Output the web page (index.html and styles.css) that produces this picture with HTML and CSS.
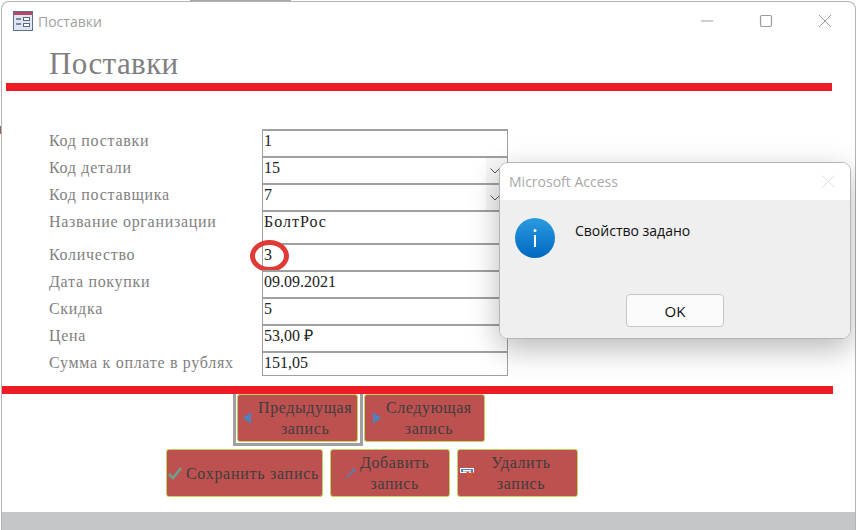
FILE: index.html
```html
<!DOCTYPE html>
<html lang="ru">
<head>
<meta charset="utf-8">
<title>Поставки</title>
<link rel="stylesheet" href="styles.css">
</head>
<body>
<div class="behind behind-bar"></div>
<div class="behind behind-tick"></div>
<div class="window">
  <header class="titlebar">
    <svg class="app-icon" width="20" height="20" viewBox="0 0 20 20">
      <rect x="0.5" y="0.5" width="19" height="19" fill="#dfe6f0" stroke="#5f6f8c"/>
      <rect x="1" y="1" width="18" height="3" fill="#b5476b"/>
      <path d="M3 8h5M3 13h5" stroke="#5a6a85" stroke-width="1.4"/>
      <rect x="10.5" y="6.5" width="6" height="3" fill="#fff" stroke="#5a6a85"/>
      <rect x="10.5" y="12.5" width="6" height="3" fill="#fff" stroke="#5a6a85"/>
    </svg>
    <span class="app-title">Поставки</span>
    <div class="controls">
      <svg width="14" height="14" viewBox="0 0 14 14"><path d="M1 7h12" stroke="#9a9a9a" stroke-width="1"/></svg>
      <svg width="14" height="14" viewBox="0 0 14 14"><rect x="1.5" y="1.5" width="11" height="11" rx="1.5" fill="none" stroke="#9a9a9a" stroke-width="1.2"/></svg>
      <svg width="14" height="14" viewBox="0 0 14 14"><path d="M1 1l12 12M13 1L1 13" stroke="#9a9a9a" stroke-width="1"/></svg>
    </div>
  </header>
  <h1 class="heading">Поставки</h1>
  <div class="rule rule-top"></div>
  <form class="record">
    <label class="lbl">Код поставки</label><div class="val">1</div>
    <label class="lbl">Код детали</label><div class="val combo">15<span class="drop"><svg width="10" height="6" viewBox="0 0 10 6"><path d="M0.5 0.5L5 5l4.5-4.5" fill="none" stroke="#555"/></svg></span></div>
    <label class="lbl">Код поставщика</label><div class="val combo">7<span class="drop"><svg width="10" height="6" viewBox="0 0 10 6"><path d="M0.5 0.5L5 5l4.5-4.5" fill="none" stroke="#555"/></svg></span></div>
    <label class="lbl">Название организации</label><div class="val tall">БолтРос</div>
    <label class="lbl">Количество</label><div class="val qty">3<span class="ring"></span></div>
    <label class="lbl">Дата покупки</label><div class="val">09.09.2021</div>
    <label class="lbl">Скидка</label><div class="val">5</div>
    <label class="lbl">Цена</label><div class="val">53,00 ₽</div>
    <label class="lbl">Сумма к оплате в рублях</label><div class="val last">151,05</div>
  </form>
  <div class="rule rule-bottom"></div>
  <div class="btn-row row-nav">
    <div class="focus">
      <div class="btn prev">
        <svg width="8" height="12" viewBox="0 0 8 12"><path d="M8 0v12L0 6z" fill="#4f81bd"/></svg>
        <span class="cap">Предыдущая<br>запись</span>
      </div>
    </div>
    <div class="btn next">
      <svg width="8" height="12" viewBox="0 0 8 12"><path d="M0 0v12l8-6z" fill="#4f81bd"/></svg>
      <span class="cap">Следующая<br>запись</span>
    </div>
  </div>
  <div class="btn-row row-edit">
    <div class="btn save">
      <svg width="14" height="13" viewBox="0 0 14 13"><path d="M1 7l4 4 8-10" fill="none" stroke="#6f9f8a" stroke-width="2.6"/></svg>
      <span class="cap">Сохранить запись</span>
    </div>
    <div class="btn add">
      <svg width="12" height="12" viewBox="0 0 12 12"><path d="M1 11l7-7" stroke="#4f81bd" stroke-width="1.4"/><path d="M7 3l2-2 2 2-2 2z" fill="#4f81bd"/></svg>
      <span class="cap">Добавить<br>запись</span>
    </div>
    <div class="btn del">
      <svg width="15" height="11" viewBox="0 0 15 11"><rect x="0.5" y="0.5" width="13" height="4" fill="#4f81bd" stroke="#fff"/><rect x="3" y="2" width="8" height="1.5" fill="#fff"/><path d="M7 4l6 6M13 4l-6 6" stroke="#d0553a" stroke-width="2.2"/></svg>
      <span class="cap">Удалить<br>запись</span>
    </div>
  </div>
  <div class="status"></div>
</div>
<div class="dialog">
  <div class="dlg-head">
    <span>Microsoft Access</span>
    <svg width="13" height="13" viewBox="0 0 13 13"><path d="M0.5 0.5l12 12M12.5 0.5l-12 12" stroke="#dedede"/></svg>
  </div>
  <div class="dlg-body">
    <div class="dlg-msg">
      <svg width="40" height="40" viewBox="0 0 40 40">
        <defs><linearGradient id="blue" x1="0" y1="0" x2="0" y2="1"><stop offset="0" stop-color="#2a9be0"/><stop offset="1" stop-color="#0067c0"/></linearGradient></defs>
        <circle cx="20" cy="20" r="20" fill="url(#blue)"/>
        <rect x="19" y="17" width="2" height="12" fill="#fff"/>
        <circle cx="20" cy="12.5" r="1.5" fill="#fff"/>
      </svg>
      <span class="msg-text">Свойство задано</span>
    </div>
    <div class="dlg-foot"><button class="ok" type="button">OK</button></div>
  </div>
</div>
</body>
</html>
```
FILE: styles.css
```css
* { box-sizing: border-box; }
html, body { margin: 0; padding: 0; height: 530px; overflow: hidden; background: #fff; }
body { position: relative; width: 856px; font-family: "Liberation Serif", serif; }
.behind { position: absolute; }
.behind-bar { left: 190px; top: 0; width: 101px; height: 1px; background: #a8a8a8; }
.behind-tick { left: 0; top: 126px; width: 1px; height: 8px; background: #8a6a5c; }
.window {
  height: 529px;
  margin: 1px 0 0 1px;
  border: 1px solid #b4b4b4;
  border-bottom: 0;
  border-radius: 8px 8px 0 0;
  display: flex;
  flex-direction: column;
  background: #fff;
  position: relative;
}
.titlebar { height: 43px; flex: none; display: flex; align-items: center; padding: 0 0 5px 11px; }
.app-title { margin-left: 5px; font: 14px "Open Sans", sans-serif; color: #a0a0a0; }
.controls { margin-left: auto; display: flex; gap: 45px; padding-right: 23px; align-items: center; }
.heading { flex: none; margin: 0; height: 38px; padding-left: 47px; font-size: 31px; line-height: 38px; font-weight: 400; color: #7f7f7f; letter-spacing: 0.4px; }
.rule { height: 8px; flex: none; background: #ed1c24; }
.rule-top { margin-left: 4px; width: 826px; }
.rule-bottom { margin-top: 10px; width: 831px; }
.record { flex: none; margin-top: 39px; padding-left: 47px; display: grid; grid-template-columns: 213px 246px; grid-template-rows: 27px 27px 27px 33px 27px 27px 27px 27px 24px; }
.lbl { font-size: 16px; letter-spacing: 0.7px; color: #7f7f7f; line-height: 21px; }
.val { position: relative; border: 1px solid #a0a0a0; border-top-width: 2px; margin-top: -1px; height: calc(100% + 1px); padding-left: 1px; font-size: 16px; line-height: 20px; color: #222; }
.val.last { border-bottom-width: 1px; }
.val.tall { letter-spacing: 1px; padding-left: 1px; }
.drop { position: absolute; right: 0; top: 0; bottom: 0; width: 21px; padding-right: 3px; background: #f7f7f7; display: flex; align-items: center; justify-content: center; }
.ring { position: absolute; left: -13px; top: -5px; width: 39px; height: 32px; border: 5px solid #e03a35; border-radius: 50%; }
.btn-row { display: flex; flex: none; }
.row-nav { padding-left: 231px; align-items: flex-start; }
.row-edit { margin-top: 3px; padding-left: 164px; gap: 7px; }
.focus { border: 3px solid #a0a0a0; border-top: 0; padding: 0 2px 1px 1px; margin-right: 1px; }
.btn {
  height: 48px;
  flex: none;
  display: flex;
  align-items: center;
  background: #bd5150;
  border: 1px solid #bfd35f;
  border-radius: 3px;
  color: #403d3d;
  font-size: 16px;
  letter-spacing: 0.6px;
  line-height: 21px;
}
.btn svg { flex: none; }
.cap { flex: 1; text-align: center; white-space: nowrap; }
.prev { width: 121px; padding: 0 5px 0 5px; gap: 7px; }
.next { width: 121px; padding: 0 13px 0 8px; gap: 5px; }
.save { width: 157px; padding: 0 2px 0 1px; gap: 3px; letter-spacing: 0.72px; }
.add { width: 120px; padding: 0 20px 0 14px; gap: 3px; }
.del { width: 121px; padding: 0 24px 0 2px; gap: 14px; }
.status { margin-top: 15px; height: 18px; flex: none; background: #c5c6c9; }
.dialog {
  position: absolute;
  left: 499px;
  top: 162px;
  width: 352px;
  height: 177px;
  border: 1px solid #b5b5b5;
  border-radius: 9px;
  overflow: hidden;
  box-shadow: 0 10px 30px rgba(0, 0, 0, 0.28);
  display: flex;
  flex-direction: column;
  font-family: "Open Sans", sans-serif;
}
.dlg-head { height: 37px; flex: none; background: #fff; display: flex; align-items: center; justify-content: space-between; padding: 0 15px 0 9px; font-size: 14px; color: #a8a8a8; }
.dlg-body { flex: 1; background: #efefef; display: flex; flex-direction: column; padding: 18px 0 11px 15px; }
.dlg-msg { display: flex; align-items: flex-start; gap: 20px; }
.msg-text { font-size: 14px; line-height: 24px; color: #111; margin-top: 1px; }
.dlg-foot { margin-top: auto; display: flex; padding-left: 111px; }
.ok { width: 98px; height: 33px; padding: 0; background: #fbfbfb; border: 1px solid #c6c6c6; border-radius: 4px; font: 15px "Open Sans", sans-serif; color: #111; }
```
